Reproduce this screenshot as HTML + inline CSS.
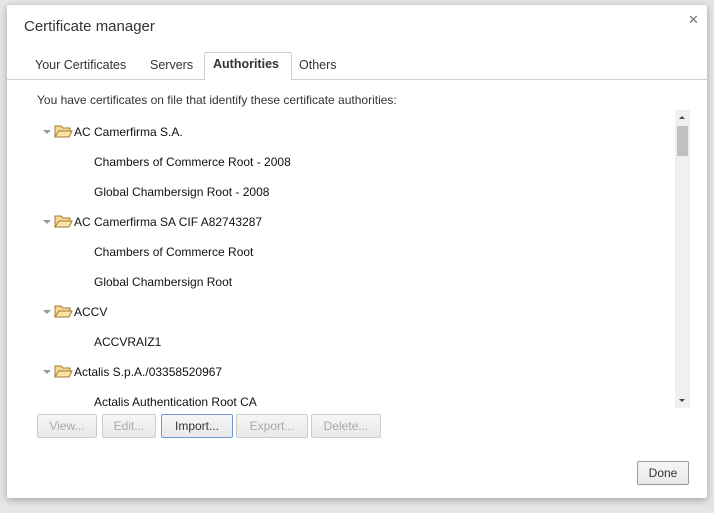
<!DOCTYPE html>
<html><head><style>
body{margin:0;width:714px;height:513px;background:#e6e6e6;font-family:"Liberation Sans",sans-serif;font-size:12px;color:#222;position:relative;overflow:hidden}
.dlg{position:absolute;left:7px;top:5px;width:700px;height:493px;background:#fff;border-radius:2px;box-shadow:0 2px 8px rgba(0,0,0,.3)}
.t{position:absolute;white-space:nowrap}
.title{left:17px;top:13px;font-size:15px;color:#333}
.x{left:681px;top:7px;font-size:13px;color:#777}
.tabline{position:absolute;left:0;right:0;top:74px;border-top:1px solid #d0d0d0}
.tab{position:absolute;top:53px;font-size:12.5px;color:#333}
.atab{position:absolute;left:197px;top:47px;width:86px;height:27px;border:1px solid #d0d0d0;border-bottom:none;background:#fff;border-radius:2px 2px 0 0}
.row{position:absolute;font-size:12px;color:#111;white-space:nowrap}
.tri{position:absolute;width:0;height:0;border-left:4px solid transparent;border-right:4px solid transparent;border-top:4px solid #999}
.btn{position:absolute;top:409px;height:22px;border:1px solid #ccc;border-radius:2px;background:linear-gradient(#f6f6f6,#e8e8e8);color:#aaa;font-size:12px;text-align:center;line-height:22px}
.sb{position:absolute;left:668px;top:105px;width:15px;height:298px;background:#f0f0f0}
</style></head><body>
<div class="dlg">
<div class="t title">Certificate manager</div>
<div class="t x">✕</div>
<div class="tabline"></div>
<div class="atab"></div>
<div class="tab" style="left:28px">Your Certificates</div>
<div class="tab" style="left:143px">Servers</div>
<div class="tab" style="left:206px;font-weight:bold;top:52px">Authorities</div>
<div class="tab" style="left:292px">Others</div>
<div class="row" style="left:30px;top:88px;color:#333">You have certificates on file that identify these certificate authorities:</div>

<div class="tri" style="left:36px;top:125px"></div>
<svg style="position:absolute;left:47px;top:119px" width="20" height="14"><path d="M1 2h6l2 2h7v3H5L2 13H1z" fill="#f6d79a" stroke="#a37a2c"/><path d="M5 7h13l-3 6H1z" fill="#fbe3a8" stroke="#a37a2c"/></svg>
<div class="row" style="left:67px;top:120px">AC Camerfirma S.A.</div>
<div class="row" style="left:87px;top:150px">Chambers of Commerce Root - 2008</div>
<div class="row" style="left:87px;top:180px">Global Chambersign Root - 2008</div>

<div class="tri" style="left:36px;top:215px"></div>
<svg style="position:absolute;left:47px;top:209px" width="20" height="14"><path d="M1 2h6l2 2h7v3H5L2 13H1z" fill="#f6d79a" stroke="#a37a2c"/><path d="M5 7h13l-3 6H1z" fill="#fbe3a8" stroke="#a37a2c"/></svg>
<div class="row" style="left:67px;top:210px">AC Camerfirma SA CIF A82743287</div>
<div class="row" style="left:87px;top:240px">Chambers of Commerce Root</div>
<div class="row" style="left:87px;top:270px">Global Chambersign Root</div>

<div class="tri" style="left:36px;top:305px"></div>
<svg style="position:absolute;left:47px;top:299px" width="20" height="14"><path d="M1 2h6l2 2h7v3H5L2 13H1z" fill="#f6d79a" stroke="#a37a2c"/><path d="M5 7h13l-3 6H1z" fill="#fbe3a8" stroke="#a37a2c"/></svg>
<div class="row" style="left:67px;top:300px">ACCV</div>
<div class="row" style="left:87px;top:330px">ACCVRAIZ1</div>

<div class="tri" style="left:36px;top:365px"></div>
<svg style="position:absolute;left:47px;top:359px" width="20" height="14"><path d="M1 2h6l2 2h7v3H5L2 13H1z" fill="#f6d79a" stroke="#a37a2c"/><path d="M5 7h13l-3 6H1z" fill="#fbe3a8" stroke="#a37a2c"/></svg>
<div class="row" style="left:67px;top:360px">Actalis S.p.A./03358520967</div>
<div class="row" style="left:87px;top:390px">Actalis Authentication Root CA</div>

<div class="sb"><div style="position:absolute;left:2px;top:16px;width:11px;height:30px;background:#c0c0c0"></div>
<div style="position:absolute;left:4px;top:6px;border-left:3px solid transparent;border-right:3px solid transparent;border-bottom:3px solid #444"></div>
<div style="position:absolute;left:4px;top:289px;border-left:3px solid transparent;border-right:3px solid transparent;border-top:3px solid #444"></div></div>

<div class="btn" style="left:30px;width:58px">View...</div>
<div class="btn" style="left:95px;width:52px">Edit...</div>
<div class="btn" style="left:154px;width:70px;border-color:#6f9ad8;color:#333">Import...</div>
<div class="btn" style="left:229px;width:70px">Export...</div>
<div class="btn" style="left:304px;width:68px">Delete...</div>
<div class="btn" style="left:630px;top:456px;width:50px;border-color:#999;color:#333">Done</div>
</div>
</body></html>
